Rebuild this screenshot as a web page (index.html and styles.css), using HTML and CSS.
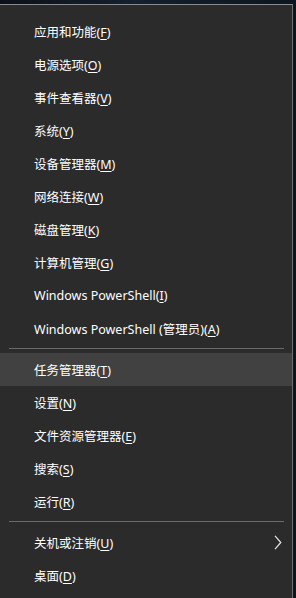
FILE: index.html
```html
<!DOCTYPE html>
<html lang="zh-CN">
<head>
  <meta charset="UTF-8">
  <title>Win+X</title>
  <meta name="viewport" content="width=device-width,initial-scale=1">
  <link rel="stylesheet" href="styles.css">
</head>
<body>
  <div class="winx-menu">
    <div class="winx-item"><span>应用和功能(<u>F</u>)</span></div>
    <div class="winx-item"><span>电源选项(<u>O</u>)</span></div>
    <div class="winx-item"><span>事件查看器(<u>V</u>)</span></div>
    <div class="winx-item"><span>系统(<u>Y</u>)</span></div>
    <div class="winx-item"><span>设备管理器(<u>M</u>)</span></div>
    <div class="winx-item"><span>网络连接(<u>W</u>)</span></div>
    <div class="winx-item"><span>磁盘管理(<u>K</u>)</span></div>
    <div class="winx-item"><span>计算机管理(<u>G</u>)</span></div>
    <div class="winx-item"><span>Windows PowerShell(<u>I</u>)</span></div>
    <div class="winx-item"><span>Windows PowerShell (管理员)(<u>A</u>)</span></div>
    <div class="winx-sep"></div>
    <div class="winx-item active"><span>任务管理器(<u>T</u>)</span></div>
    <div class="winx-item"><span>设置(<u>N</u>)</span></div>
    <div class="winx-item"><span>文件资源管理器(<u>E</u>)</span></div>
    <div class="winx-item"><span>搜索(<u>S</u>)</span></div>
    <div class="winx-item"><span>运行(<u>R</u>)</span></div>
    <div class="winx-sep"></div>
    <div class="winx-item">
      <span>关机或注销(<u>U</u>)</span>
      <svg class="winx-arrow" width="8" height="15" viewBox="0 0 8 15">
        <polyline points="1,0.8 6.8,7.5 1,14.2" fill="none" stroke="#e8e8e8" stroke-width="1.2"/>
      </svg>
    </div>
    <div class="winx-item"><span>桌面(<u>D</u>)</span></div>
  </div>
</body>
</html>
```

FILE: styles.css
```css
html, body {
  margin: 0;
  height: 100%;
}
body {
  background: linear-gradient(90deg, #0c1119 0%, #14202e 45%, #0d151f 100%);
  font-family: 'Noto Sans', 'Noto Sans CJK SC', sans-serif;
  font-size: 12.5px;
  color: #fff;
  overflow: hidden;
}
.winx-menu {
  margin-top: 4px;
  width: 293px;
  height: 600px;
  background: #2b2b2b;
  border-top: 1px solid #8c8c8c;
  border-right: 1px solid #6e6e6e;
  padding-top: 10px;
  box-sizing: border-box;
}
.winx-item {
  height: 33px;
  padding: 0 10px 0 34px;
  display: flex;
  align-items: center;
  justify-content: space-between;
  white-space: nowrap;
}
.winx-item u {
  text-decoration-thickness: 1px;
  text-underline-offset: 2px;
}
.winx-item.active {
  background: #414141;
}
.winx-sep {
  height: 1px;
  background: #6a6a6a;
  margin: 3px 8px 4px 9px;
}
.winx-arrow {
  display: block;
}
```
